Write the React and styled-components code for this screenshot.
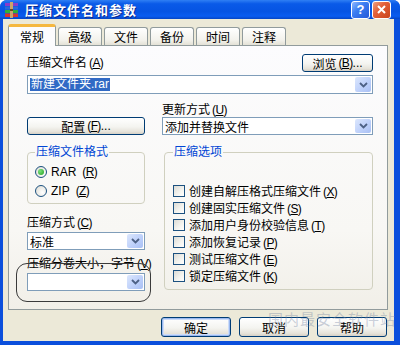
import React from 'react';
import styled, { createGlobalStyle } from 'styled-components';

const GlobalStyle = createGlobalStyle`
  html, body { margin: 0; padding: 0; background: #fff; }
  body {
    font-family: "Liberation Sans", "Noto Sans CJK SC", sans-serif;
    font-size: 12px;
    color: #000;
  }
  * { box-sizing: border-box; }
`;

const Frame = styled.div`
  position: relative;
  width: 400px;
  height: 345px;
  display: flex;
  flex-direction: column;
  background: #0b4fdc;
  border-radius: 7px 7px 0 0;
  overflow: hidden;
`;

const TitleBar = styled.div`
  height: 19px;
  display: flex;
  align-items: center;
  padding: 0 9px 0 4px;
  background: linear-gradient(#2f7ff4, #0a5ae8 20%, #0654e3 60%, #0a5cf0 85%, #0645c4);
  color: #fff;
`;

const TitleText = styled.div`
  margin-left: 6px;
  font-family: "Noto Sans CJK SC", sans-serif;
  font-weight: bold;
  font-size: 13px;
  letter-spacing: 1px;
  text-shadow: 1px 1px 0 #0a2a8e;
  flex: 1;
`;

const CaptionButton = styled.div`
  width: 19px;
  height: 18px;
  margin-left: 2px;
  border: 1px solid #fff;
  border-radius: 3px;
  display: flex;
  align-items: center;
  justify-content: center;
  color: #fff;
  font: bold 13px "Liberation Sans", sans-serif;
  background: ${p => p.$close
    ? 'linear-gradient(135deg, #f0a080, #e2603a 40%, #c9441c)'
    : 'linear-gradient(135deg, #8fb8ff, #3b7ef2 40%, #2558d8)'};
`;

const Body = styled.div`
  flex: 1;
  margin: 0 6px 4px 3px;
  padding: 5px 0 0 5px;
  background: #ece9d8;
  display: flex;
  flex-direction: column;
`;

const TabRow = styled.div`
  height: 21px;
  display: flex;
  align-items: flex-end;
  gap: 2px;
`;

const Tab = styled.div`
  position: relative;
  z-index: ${p => (p.$active ? 1 : 0)};
  width: ${p => (p.$active ? 48 : 44)}px;
  height: ${p => (p.$active ? 22 : 18)}px;
  margin-bottom: ${p => (p.$active ? -1 : 0)}px;
  display: flex;
  align-items: center;
  justify-content: center;
  border: 1px solid #919b9c;
  border-bottom: none;
  border-top: ${p => (p.$active ? '3px solid #f5b840' : '1px solid #919b9c')};
  border-radius: 3px 3px 0 0;
  background: ${p => (p.$active ? '#fcfcfe' : 'linear-gradient(#ffffff, #f3f2ec 70%, #e3e1d6)')};
`;

const Panel = styled.div`
  position: relative;
  width: 380px;
  height: 265px;
  border: 1px solid #919b9c;
  background: linear-gradient(#fcfcfe, #f8f7f4 70%, #f1efe8);
  padding: 8px 14px 0 18px;
`;

const TopRow = styled.div`
  height: 18px;
  display: flex;
  align-items: center;
  justify-content: space-between;
`;

const Label = styled.div`
  line-height: 14px;
  height: 14px;
  white-space: nowrap;
  margin-top: ${p => p.$mt || 0}px;
`;

const AccelText = styled.span`
  letter-spacing: -0.6px;
  margin-left: 2px;
`;

const Button = styled.div`
  width: ${p => p.$w || 70}px;
  height: ${p => p.$h || 18}px;
  border: 1px solid #003c74;
  border-radius: 3px;
  display: flex;
  align-items: center;
  justify-content: center;
  white-space: nowrap;
  background: linear-gradient(#ffffff, #f4f4f0 55%, #e6e3da 85%, #d6d0c5);
  box-shadow: ${p => (p.$default ? 'inset 0 0 0 1px #9ab9f0, inset 0 0 0 2px #cddcf8' : 'none')};
`;

const Combo = styled.div`
  height: ${p => p.$h || 18}px;
  margin-top: ${p => p.$mt || 0}px;
  border: 1px solid #7f9db9;
  background: #fff;
  display: flex;
  align-items: center;
  padding-left: 2px;
  white-space: nowrap;
`;

const Selected = styled.span`
  background: #316ac5;
  color: #fff;
  line-height: 13px;
  padding: 0 1px;
`;

const DropButton = styled.div`
  align-self: stretch;
  width: 16px;
  margin: 1px 1px 1px auto;
  border-radius: 2px;
  background: linear-gradient(135deg, #dce7fd, #bccffa 60%, #a9c0f4);
  display: flex;
  align-items: center;
  justify-content: center;
`;

const TwoCols = styled.div`
  display: grid;
  grid-template-columns: 118px 211px;
  column-gap: 17px;
  align-items: start;
  margin-top: ${p => p.$mt || 0}px;
`;

const Col = styled.div`
  display: flex;
  flex-direction: column;
`;

const Group = styled.fieldset`
  margin: 0 0 0 ${p => p.$ml || 0}px;
  padding: ${p => p.$pad};
  border: 1px solid #d0d0bf;
  border-radius: 4px;
  min-width: 0;
`;

const Legend = styled.legend`
  padding: 0 1px;
  line-height: 12px;
  color: #0046d5;
`;

const OptionRow = styled.div`
  height: ${p => p.$h}px;
  display: flex;
  align-items: center;
  gap: 4px;
  white-space: nowrap;
`;

const Radio = styled.span`
  width: 12px;
  height: 12px;
  border-radius: 50%;
  border: 1px solid #1c5180;
  background: radial-gradient(circle at 65% 65%, #ffffff, #e6e5df 70%, #d2d1c9);
  display: flex;
  align-items: center;
  justify-content: center;
  &::after {
    content: '';
    display: ${p => (p.$checked ? 'block' : 'none')};
    width: 6px;
    height: 6px;
    border-radius: 50%;
    background: radial-gradient(circle at 35% 35%, #7be07b, #21a121);
  }
`;

const Check = styled.span`
  width: 12px;
  height: 12px;
  border: 1px solid #1c5180;
  background: linear-gradient(135deg, #dcdbd5, #f4f4f0 60%, #ffffff);
`;

const Annotation = styled.div`
  position: absolute;
  left: 7px;
  top: 217px;
  width: 135px;
  height: 39px;
  border: 1.5px solid #3a3a3a;
  border-radius: 11px;
  pointer-events: none;
`;

const ButtonRow = styled.div`
  margin-top: 7px;
  padding-right: 1px;
  display: flex;
  justify-content: flex-end;
  gap: 8px;
  width: 380px;
`;

const Watermark = styled.div`
  position: absolute;
  left: 268px;
  top: 308px;
  font-family: "Noto Sans CJK SC", sans-serif;
  font-size: 15px;
  letter-spacing: 1px;
  color: rgba(120, 135, 165, 0.4);
  white-space: nowrap;
  pointer-events: none;
`;

const Accel = ({ k }) => (
  <AccelText>(<u>{k}</u>)</AccelText>
);

const Chevron = () => (
  <svg width="9" height="6" viewBox="0 0 9 6">
    <path d="M1 1 L4.5 4.5 L8 1" stroke="#4d6185" strokeWidth="1.8" fill="none" />
  </svg>
);

const RarIcon = () => (
  <svg width="15" height="16" viewBox="0 0 15 16">
    <rect x="1" y="1" width="13" height="3" fill="#8a3cc8" />
    <rect x="1" y="4.5" width="13" height="3" fill="#2a6ad8" />
    <rect x="1" y="8" width="13" height="3" fill="#2fae3c" />
    <rect x="1" y="11.5" width="13" height="3.5" fill="#d8342c" />
    <rect x="6" y="0" width="3" height="16" fill="#caa46a" />
    <rect x="6" y="7" width="3" height="2" fill="#6a4a20" />
  </svg>
);

const CloseX = () => (
  <svg width="9" height="9" viewBox="0 0 9 9">
    <path d="M1 1 L8 8 M8 1 L1 8" stroke="#fff" strokeWidth="2" />
  </svg>
);

const ComboBox = ({ children, ...rest }) => (
  <Combo {...rest}>
    {children}
    <DropButton><Chevron /></DropButton>
  </Combo>
);

const tabs = ['常规', '高级', '文件', '备份', '时间', '注释'];

const options = [
  ['创建自解压格式压缩文件', 'X'],
  ['创建固实压缩文件', 'S'],
  ['添加用户身份校验信息', 'T'],
  ['添加恢复记录', 'P'],
  ['测试压缩文件', 'E'],
  ['锁定压缩文件', 'K'],
];

const App = () => (
  <>
    <GlobalStyle />
    <Frame>
      <TitleBar>
        <RarIcon />
        <TitleText>压缩文件名和参数</TitleText>
        <CaptionButton>?</CaptionButton>
        <CaptionButton $close><CloseX /></CaptionButton>
      </TitleBar>
      <Body>
        <TabRow>
          {tabs.map((t, i) => (
            <Tab key={t} $active={i === 0}>{t}</Tab>
          ))}
        </TabRow>
        <Panel>
          <TopRow>
            <Label>压缩文件名<Accel k="A" /></Label>
            <Button $w={71}>浏览<Accel k="B" />...</Button>
          </TopRow>
          <ComboBox $h={19} $mt={3}>
            <Selected>新建文件夹.rar</Selected>
          </ComboBox>
          <TwoCols $mt={9}>
            <Col>
              <Button $w={118} style={{ marginTop: 14 }}>配置<Accel k="F" />...</Button>
            </Col>
            <Col>
              <Label>更新方式<Accel k="U" /></Label>
              <ComboBox>添加并替换文件</ComboBox>
            </Col>
          </TwoCols>
          <TwoCols $mt={11}>
            <Col>
              <Group $pad="4px 0 3px 7px">
                <Legend>压缩文件格式</Legend>
                <OptionRow $h={19}><Radio $checked />RAR<Accel k="R" /></OptionRow>
                <OptionRow $h={19}><Radio />ZIP<Accel k="Z" /></OptionRow>
              </Group>
              <Label $mt={12}>压缩方式<Accel k="C" /></Label>
              <ComboBox $mt={2}>标准</ComboBox>
              <Label $mt={7}>压缩分卷大小，字节<Accel k="V" /></Label>
              <ComboBox $mt={2} />
            </Col>
            <Col>
              <Group $pad="24px 0 5px 8px" $ml={2}>
                <Legend>压缩选项</Legend>
                {options.map(([text, key]) => (
                  <OptionRow key={key} $h={17}>
                    <Check />
                    <span>{text}<Accel k={key} /></span>
                  </OptionRow>
                ))}
              </Group>
            </Col>
          </TwoCols>
          <Annotation />
        </Panel>
        <ButtonRow>
          <Button $default $h={20}>确定</Button>
          <Button $h={20}>取消</Button>
          <Button $h={20}>帮助</Button>
        </ButtonRow>
      </Body>
      <Watermark>国内最安全软件站</Watermark>
    </Frame>
  </>
);

export default App;
